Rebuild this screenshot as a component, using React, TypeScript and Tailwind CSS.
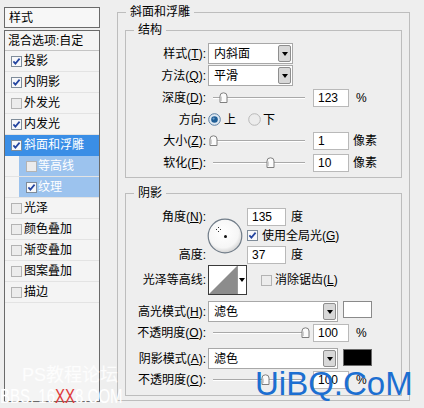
import React from 'react';

function Check({ checked }: { checked: boolean }) {
  return (
    <svg width="11" height="11" viewBox="0 0 11 11" className="shrink-0">
      <rect x="0.5" y="0.5" width="10" height="10" fill={checked ? '#f7f8fa' : '#ececec'} stroke={checked ? '#7f8c99' : '#b3b3b3'} />
      {checked && <path d="M2.4 5.4 L4.4 7.6 L8.6 2.6" fill="none" stroke="#2445a0" strokeWidth="1.7" />}
    </svg>
  );
}

function Radio({ on }: { on: boolean }) {
  return (
    <svg width="13" height="13" viewBox="0 0 13 13" className="shrink-0">
      <circle cx="6.5" cy="6.5" r="5.8" fill={on ? '#dfe9f3' : '#ececec'} stroke={on ? '#5b7fa3' : '#b8b8b8'} />
      {on && <circle cx="6.5" cy="6.5" r="3.3" fill="#1f5e96" />}
      {on && <circle cx="5.6" cy="5.6" r="1.1" fill="#6fa0cc" />}
    </svg>
  );
}

function Arrow() {
  return <div className="w-0 h-0 border-l-[3px] border-r-[3px] border-t-[4px] border-l-transparent border-r-transparent border-t-black" />;
}

function Dropdown({ text, w }: { text: string; w: string }) {
  return (
    <div className={`flex h-[21px] ${w} items-center border border-[#a8a8a8] bg-white pl-[5px] shrink-0`}>
      <span className="flex-1">{text}</span>
      <div className="mr-[1px] flex h-[17px] w-[13px] items-center justify-center rounded-[2px] border border-[#8e8e8e] bg-[#d8d8d8]">
        <Arrow />
      </div>
    </div>
  );
}

function Slider({ pos }: { pos: number }) {
  return (
    <div className="relative ml-[2px] h-[14px] w-[97px] shrink-0">
      <div className="absolute left-[5px] right-0 top-[6px] h-[2px] border-t border-b border-t-[#a9a9a9] border-b-white" />
      <svg width="9" height="11" viewBox="0 0 9 11" className="absolute top-[1px]" style={{ left: pos - 208 - 4 }}>
        <path d="M1 10.5 V4 Q1 0.8 4.5 0.8 Q8 0.8 8 4 V10.5 Z" fill="#fbfbfb" stroke="#7f7f7f" />
        <path d="M2.5 9 V4.5" stroke="#d0d0d0" />
      </svg>
    </div>
  );
}

function Input({ v, w = 'w-[36px]' }: { v: string; w?: string }) {
  return (
    <div className={`flex h-[18px] ${w} items-center border border-[#b9b9b9] bg-white pl-[4px] shrink-0`}>{v}</div>
  );
}

function Label({ children }: { children: React.ReactNode }) {
  return <div className="w-[80px] shrink-0 text-right whitespace-nowrap">{children}</div>;
}

const items = [
  { t: '投影', c: true },
  { t: '内阴影', c: true },
  { t: '外发光', c: false },
  { t: '内发光', c: true },
  { t: '斜面和浮雕', c: true, sel: true },
  { t: '等高线', c: false, sub: true },
  { t: '纹理', c: true, sub: true },
  { t: '光泽', c: false },
  { t: '颜色叠加', c: false },
  { t: '渐变叠加', c: false },
  { t: '图案叠加', c: false },
  { t: '描边', c: false },
];

export default function App() {
  return (
    <div className="relative flex h-[408px] w-[424px] overflow-hidden bg-[#eeeeee] font-['Liberation_Sans','Noto_Sans_CJK_SC',sans-serif] text-[12px] leading-[16px] text-black">
      {/* Left list */}
      <div className="ml-[4px] mt-[7px] flex w-[96px] shrink-0 flex-col">
        <div className="flex h-[21px] items-center border border-[#6a6a6a] bg-[#f7f7f7] pl-[4px]">样式</div>
        <div className="mt-[2px] h-[372px] border border-[#6a6a6a] bg-[#f4f4f4]">
          <div className="flex h-[20px] items-center border-b border-[#c4c4c4] pl-[3px] whitespace-nowrap">混合选项:自定</div>
          {items.map((it) =>
            it.sub ? (
              <div key={it.t} className="h-[21px] border-b border-[#e3e3e3] pl-[14px]">
                <div className="flex h-full items-center gap-[1px] bg-[#9cc3ee] pl-[7px] text-white">
                  <Check checked={it.c} />
                  <span>{it.t}</span>
                </div>
              </div>
            ) : (
              <div
                key={it.t}
                className={`flex h-[21px] items-center gap-[2px] border-b pl-[6px] whitespace-nowrap ${it.sel ? 'border-[#3a8ee6] bg-[#3a8ee6] text-white' : 'border-[#e3e3e3]'}`}
              >
                <Check checked={it.c} />
                <span>{it.t}</span>
              </div>
            )
          )}
        </div>
      </div>

      {/* Right panel */}
      <div className="ml-[17px] mt-[4px] w-[293px] shrink-0">
        <fieldset className="border border-[#bdbdbd] pb-[4px]">
          <legend className="ml-[8px] px-[4px] leading-[16px]">斜面和浮雕</legend>

          {/* 结构 */}
          <fieldset className="mx-[7px] mt-[2px] border border-[#bdbdbd] pt-[5px] pb-[4px]">
            <legend className="ml-[8px] px-[4px] leading-[16px]">结构</legend>
            <div className="flex h-[21px] items-center">
              <Label>样式(<u>T</u>):</Label>
              <div className="ml-[2px]"><Dropdown text="内斜面" w="w-[85px]" /></div>
            </div>
            <div className="mt-[1px] flex h-[21px] items-center">
              <Label>方法(<u>Q</u>):</Label>
              <div className="ml-[2px]"><Dropdown text="平滑" w="w-[85px]" /></div>
            </div>
            <div className="mt-[1px] flex h-[22px] items-center">
              <Label>深度(<u>D</u>):</Label>
              <Slider pos={223} />
              <div className="ml-[8px]"><Input v="123" /></div>
              <span className="ml-[7px]">%</span>
            </div>
            <div className="flex h-[21px] items-center">
              <Label>方向:</Label>
              <div className="ml-[2px]"><Radio on /></div>
              <span className="ml-[3px]">上</span>
              <div className="ml-[12px]"><Radio on={false} /></div>
              <span className="ml-[2px]">下</span>
            </div>
            <div className="flex h-[22px] items-center">
              <Label>大小(<u>Z</u>):</Label>
              <Slider pos={213} />
              <div className="ml-[8px]"><Input v="1" /></div>
              <span className="ml-[4px]">像素</span>
            </div>
            <div className="flex h-[21px] items-center">
              <Label>软化(<u>F</u>):</Label>
              <Slider pos={270} />
              <div className="ml-[8px]"><Input v="10" /></div>
              <span className="ml-[4px]">像素</span>
            </div>
          </fieldset>

          {/* 阴影 */}
          <fieldset className="mx-[7px] mt-[7px] border border-[#bdbdbd] pt-[6px] pb-[5px]">
            <legend className="ml-[8px] px-[4px] leading-[16px]">阴影</legend>
            <div className="flex">
              <div className="flex w-[80px] shrink-0 flex-col">
                <div className="flex h-[19px] items-center justify-end">角度(<u>N</u>):</div>
                <div className="h-[19px]" />
                <div className="flex h-[19px] items-center justify-end">高度:</div>
              </div>
              <div className="ml-[1px] flex w-[36px] items-center justify-center">
                <svg width="36" height="36" viewBox="0 0 36 36">
                  <defs>
                    <radialGradient id="dial" cx="0.45" cy="0.4" r="0.6">
                      <stop offset="0" stopColor="#ffffff" />
                      <stop offset="0.75" stopColor="#f6f6f6" />
                      <stop offset="1" stopColor="#d4d4d4" />
                    </radialGradient>
                  </defs>
                  <circle cx="18" cy="18" r="16.8" fill="url(#dial)" stroke="#707c88" strokeWidth="1.2" />
                  <rect x="11" y="9" width="1" height="1" fill="#333" />
                  <rect x="9" y="11" width="1" height="1" fill="#333" />
                  <rect x="13" y="11" width="1" height="1" fill="#333" />
                  <rect x="11" y="13" width="1" height="1" fill="#333" />
                  <circle cx="18.5" cy="18.5" r="1.5" fill="#111" />
                </svg>
              </div>
              <div className="ml-[4px] flex flex-col">
                <div className="flex h-[19px] items-center">
                  <Input v="135" w="w-[39px]" />
                  <span className="ml-[5px]">度</span>
                </div>
                <div className="flex h-[19px] items-center">
                  <Check checked />
                  <span className="ml-[4px]">使用全局光(<u>G</u>)</span>
                </div>
                <div className="flex h-[19px] items-center">
                  <Input v="37" w="w-[39px]" />
                  <span className="ml-[5px]">度</span>
                </div>
              </div>
            </div>

            <div className="mt-[1px] flex h-[30px] items-center">
              <Label>光泽等高线:</Label>
              <div className="ml-[2px] flex h-[30px] w-[39px] shrink-0 border border-[#3a3a3a] bg-white">
                <svg width="28" height="28" viewBox="0 0 28 28" className="shrink-0">
                  <path d="M0 28 L28 0 L28 28 Z" fill="#8c8c8c" />
                </svg>
                <div className="flex flex-1 items-center justify-center border-l border-[#9a9a9a]">
                  <Arrow />
                </div>
              </div>
              <div className="ml-[14px]"><Check checked={false} /></div>
              <span className="ml-[3px]">消除锯齿(<u>L</u>)</span>
            </div>

            <div className="mt-[6px] flex h-[21px] items-start">
              <div className="flex h-[21px] items-center"><Label>高光模式(<u>H</u>):</Label></div>
              <div className="ml-[2px]"><Dropdown text="滤色" w="w-[130px]" /></div>
              <div className="ml-[5px] h-[17px] w-[29px] border border-[#8a8a8a] bg-white" />
            </div>
            <div className="flex h-[21px] items-center">
              <Label>不透明度(<u>O</u>):</Label>
              <Slider pos={305} />
              <div className="ml-[8px]"><Input v="100" /></div>
              <span className="ml-[7px]">%</span>
            </div>
            <div className="mt-[5px] flex h-[21px] items-start">
              <div className="flex h-[21px] items-center"><Label>阴影模式(<u>A</u>):</Label></div>
              <div className="ml-[2px]"><Dropdown text="滤色" w="w-[130px]" /></div>
              <div className="ml-[5px] mt-[1px] h-[17px] w-[29px] border border-[#6a6a6a] bg-black" />
            </div>
            <div className="flex h-[21px] items-center">
              <Label>不透明度(<u>C</u>):</Label>
              <Slider pos={265} />
              <div className="ml-[8px]"><Input v="100" /></div>
              <span className="ml-[7px]">%</span>
            </div>
          </fieldset>
        </fieldset>
      </div>

      {/* Watermarks */}
      <div className="absolute left-[22px] top-[366px] text-[18px] leading-[18px] text-white/80 whitespace-nowrap">PS教程论坛</div>
      <div className="absolute left-0 top-[386px] origin-left scale-x-[0.75] text-[20px] leading-[20px] text-white whitespace-nowrap">
        BBS. 16<span className="text-[#e03a3a]">XX</span>8.COM
      </div>
      <div className="absolute left-[255px] top-[367px] text-[33px] leading-[33px] text-[#1c6fd1] whitespace-nowrap">UiBQ.CoM</div>
    </div>
  );
}
